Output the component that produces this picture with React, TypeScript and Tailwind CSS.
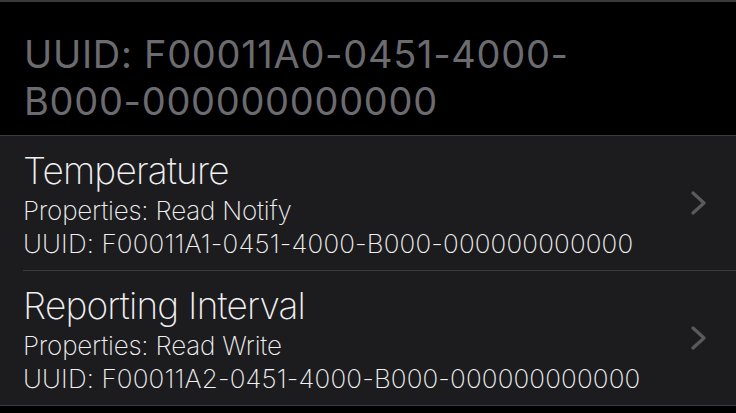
import type React from "react";

const rows = [
  {
    name: "Temperature",
    properties: "Read Notify",
    uuid: "F00011A1-0451-4000-B000-000000000000",
  },
  {
    name: "Reporting Interval",
    properties: "Read Write",
    uuid: "F00011A2-0451-4000-B000-000000000000",
  },
];

export default function App() {
  return (
    <div className="w-[736px] h-[413px] overflow-hidden bg-black font-['Inter','Liberation_Sans',sans-serif]">
      {/* Service header */}
      <div className="border-t-2 border-[#3a3a3d] bg-black pl-6 pt-[29px] pb-[10px]">
        <p className="text-[38px] leading-[47px] font-[370] tracking-[0.7px] text-[#6b6b70]">
          UUID: F00011A0-0451-4000-
          <br />
          B000-000000000000
        </p>
      </div>

      {/* Characteristics */}
      <div className="border-t border-b border-[#3a3a3d] bg-[#1c1c1e]">
        {rows.map((row, i) => (
          <CharacteristicRow key={row.name} {...row} last={i === rows.length - 1} />
        ))}
      </div>
    </div>
  );
}

function CharacteristicRow({
  name,
  properties,
  uuid,
  last,
}: {
  name: string;
  properties: string;
  uuid: string;
  last: boolean;
}) {
  return (
    <div className="pl-[23px]">
      <div
        className={`flex items-center pr-[29px] ${
          last ? "h-[134px]" : "h-[135px] border-b border-[#3a3a3d]"
        }`}
      >
        <div className="flex-1 pt-[12px] pb-[10px] text-[#f0f0f2]">
          <div className="text-[37px] leading-[46px] font-[220] tracking-[-0.8px]">{name}</div>
          <div className="text-[26px] leading-[33px] font-[250] tracking-[-0.2px]">
            Properties: {properties}
          </div>
          <div className="text-[26px] leading-[33px] font-[250] tracking-[0.15px]">
            UUID: {uuid}
          </div>
        </div>
        <Chevron />
      </div>
    </div>
  );
}

function Chevron(): React.ReactElement {
  return (
    <svg width="16" height="24" viewBox="0 0 16 24" fill="none">
      <polyline
        points="2,2 13,12 2,22"
        stroke="#5a5a5e"
        strokeWidth="3.2"
        strokeLinecap="round"
        strokeLinejoin="round"
      />
    </svg>
  );
}
